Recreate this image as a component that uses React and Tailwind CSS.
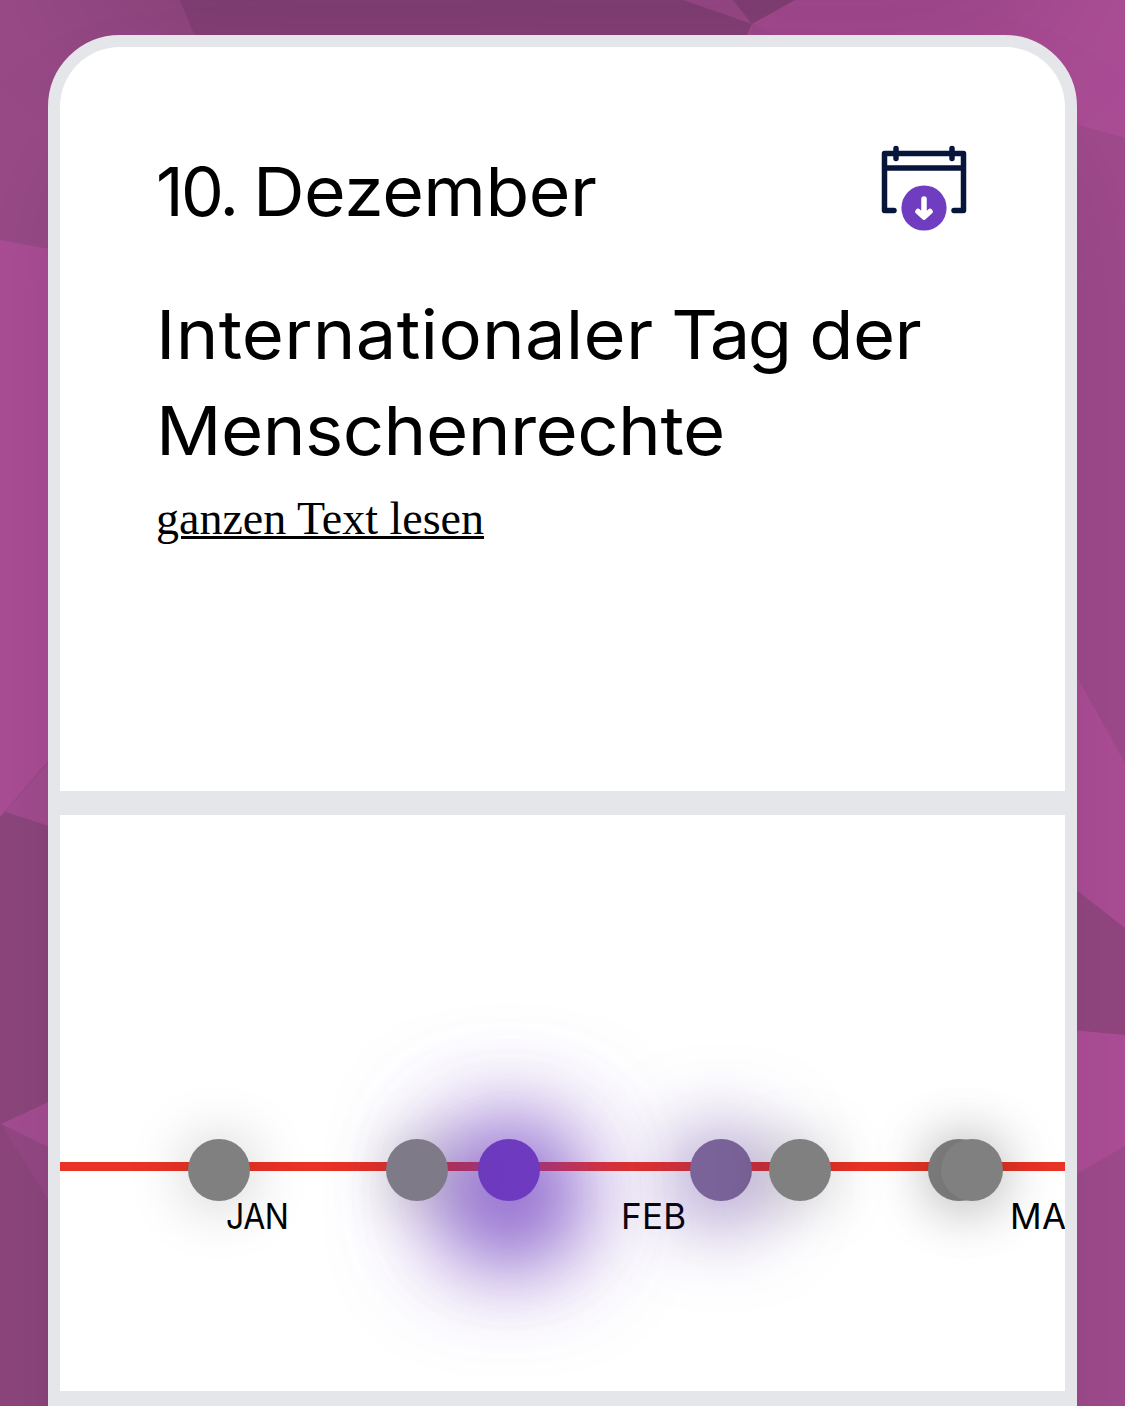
const facets = [
  ['0,0 180,0 205,60 205,300 0,300', '#984a87'],
  ['180,0 700,0 752,24 735,60 205,60', '#8a437b'],
  ['683,0 735,0 752,24', '#a04c8d'],
  ['733,0 795,0 752,24', '#8a437b'],
  ['795,0 1125,0 1125,138 1040,115 752,24', '#ab4d96'],
  ['752,24 735,60 900,60', '#ab4d96'],
  ['752,24 752,60 830,60', '#a54b91'],
  ['0,240 100,258 100,700 0,817', '#ab4d96'],
  ['5,812 100,705 100,845', '#a24c90'],
  ['0,817 5,812 100,842 100,1406 0,1406', '#8d467d'],
  ['1,1124 100,1078 100,1173', '#a54d93'],
  ['1,1124 100,1173 100,1283', '#954884'],
  ['1040,115 1125,138 1125,763 1040,610', '#9f4a8c'],
  ['1040,610 1125,763 1125,930 1040,860', '#ac4d96'],
  ['1040,862 1125,928 1125,1035 1040,1028', '#934681'],
  ['1040,1027 1125,1035 1125,1147 1040,1195', '#ae4e98'],
  ['1040,1195 1125,1146 1125,1406 1040,1406', '#9f4b8d'],
];

function Backdrop() {
  return (
    <svg className="absolute inset-0 h-full w-full" viewBox="0 0 1125 1406" aria-hidden="true">
      <rect width="1125" height="1406" fill="#984a87" />
      {facets.map(([points, fill], i) => (
        <polygon key={i} points={points} fill={fill} />
      ))}
    </svg>
  );
}

function CalendarDownload() {
  return (
    <svg className="-mr-[3px] h-24 w-24 shrink-0" viewBox="0 0 96 96" fill="none" aria-label="Kalender">
      <g stroke="#07153a" strokeWidth="5.5" strokeLinecap="round" strokeLinejoin="round">
        <path d="M18 67.500H8.500V10.500H87.500V67.500H78" />
        <path d="M9 25H87" />
        <path d="M20 5.500V15.500M76 5.500V15.500" />
      </g>
      <circle cx="48" cy="65" r="22.600" fill="#703cc0" />
      <path d="M48 56V73M42 68.500L48 74L54 68.500" stroke="#fff" strokeWidth="5.5" strokeLinecap="round" strokeLinejoin="round" />
    </svg>
  );
}

const greyGlow = 'bg-[#808080] shadow-[0_3px_60px_2px_rgba(0,0,0,0.22)]';
const events = [
  { x: 128, look: greyGlow },
  { x: 418, look: 'bg-[#6e3bc0] shadow-[0_20px_110px_34px_rgba(110,59,192,0.7),0_26px_90px_26px_rgba(100,50,185,0.75)]' },
  { x: 326, look: 'bg-[#7f7a87] shadow-[0_3px_60px_2px_rgba(0,0,0,0.22)]' },
  { x: 630, look: 'bg-[#7a6399] shadow-[0_8px_80px_14px_rgba(75,35,145,0.6)]' },
  { x: 709, look: greyGlow },
  { x: 868, look: greyGlow },
  { x: 881, look: greyGlow },
];
const months = [
  { x: 166, name: 'JAN', spacing: 'tracking-[-0.5px] scale-x-[0.915]' },
  { x: 561, name: 'FEB', spacing: 'tracking-[0.3px]' },
  { x: 950, name: 'MAR', spacing: 'tracking-[0.5px]' },
];

function Timeline() {
  return (
    <section className="relative h-[576px] overflow-hidden bg-white">
      <div className="mt-[347px] h-[9px] bg-[#e93326]" />
      {months.map((m) => (
        <span key={m.name} className={`absolute top-[377px] origin-left text-[35px] leading-[48px] ${m.spacing}`} style={{ left: m.x }}>
          {m.name}
        </span>
      ))}
      {events.map((e) => (
        <span key={e.x} className={`absolute top-[324px] size-[62px] rounded-full ${e.look}`} style={{ left: e.x }} />
      ))}
    </section>
  );
}

export default function App() {
  return (
    <main className="relative h-[1406px] overflow-hidden px-12 font-['Inter',sans-serif] text-black">
      <Backdrop />
      <div className="absolute -top-[400px] left-12 h-[385px] w-[1029px] rounded-[72px] shadow-[0_75px_150px_-36px_rgba(0,0,0,0.16)]" />
      <article className="relative mt-[35px] h-[1700px] overflow-hidden rounded-[72px] border-12 border-[#e4e6ea] bg-[#e4e6ea] shadow-[0_75px_150px_-36px_rgba(0,0,0,0.15)]">
        <div className="flex flex-col gap-6">
          <section className="h-[744px] bg-white px-24 pt-24">
            <header className="flex items-center justify-between">
              <h2 className="text-[68px] leading-24 font-[430] whitespace-pre">
                <span className="tracking-[-2.700px]">10. </span>
                <span className="inline-block origin-left scale-x-[1.052] tracking-[-0.5px]">Dezember</span>
              </h2>
              <CalendarDownload />
            </header>
            <h1 className="mt-[47px] text-[68px] leading-24 font-[430] tracking-[-0.5px] whitespace-nowrap">
              <span className="block origin-left scale-x-[1.063]">
                <span className="tracking-[0.25px]">Internationaler</span>
                <span className="tracking-[-2.500px]"> Tag</span> der
              </span>
              <span className="block origin-left scale-x-[1.066]">Menschenrechte</span>
            </h1>
            <a href="#" className="mt-[5px] block w-fit font-['Liberation_Serif',serif] text-[46px] leading-[72px] whitespace-nowrap underline decoration-[3px] underline-offset-[2px]">
              ganzen Text lesen
            </a>
          </section>
          <Timeline />
        </div>
      </article>
    </main>
  );
}
